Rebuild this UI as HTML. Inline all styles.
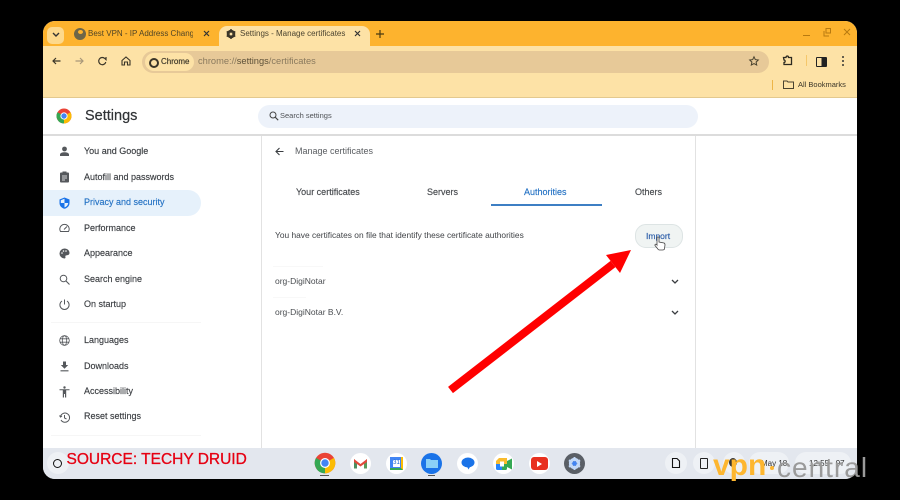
<!DOCTYPE html>
<html><head><meta charset="utf-8"><style>
html,body{margin:0;padding:0;width:900px;height:500px;background:#000;overflow:hidden}
body{font-family:"Liberation Sans",sans-serif;position:relative}
#w{position:absolute;left:43px;top:21px;width:814px;height:458px;border-radius:12px;overflow:hidden;background:#fff;filter:blur(.35px)}
.a{position:absolute}
.t{position:absolute;white-space:nowrap;line-height:12px;font-size:9px;color:#3c4043}
.n{font-size:9px;color:#3a3d41;-webkit-text-stroke:.15px #3a3d41}
svg{position:absolute;overflow:visible}
</style></head><body>
<div id="w">
<!-- tab strip -->
<div class="a" style="left:0;top:0;width:814px;height:26px;background:#FDB32E"></div>
<div class="a" style="left:0;top:25px;width:814px;height:52px;background:#FDE2A6"></div>
<div class="a" style="left:0;top:76px;width:814px;height:1px;background:#E3C98F"></div>
<div class="a" style="left:4px;top:6px;width:17px;height:17px;border-radius:5px;background:#FDD98C"></div>
<svg style="left:9px;top:11px" width="8" height="6"><path d="M1 1l3 3 3-3" fill="none" stroke="#333" stroke-width="1.4"/></svg>
<div class="a" style="left:31px;top:7px;width:12px;height:12px;border-radius:50%;background:#6d6648"></div>
<div class="a" style="left:35px;top:9px;width:5px;height:4px;border-radius:50%;background:#FDB32E"></div>
<div class="t" style="left:45px;top:7px;font-size:8px;color:#4f4426">Best VPN - IP Address Changer</div>
<div class="a" style="left:150px;top:2px;width:18px;height:22px;background:#FDB32E"></div>
<svg style="left:160px;top:9px" width="7" height="7"><path d="M1 1l5 5M6 1l-5 5" stroke="#333" stroke-width="1.2"/></svg>
<div class="a" style="left:176px;top:5px;width:151px;height:22px;border-radius:8px 8px 0 0;background:#FDE2A6"></div>
<svg style="left:183px;top:8px" width="10" height="10" viewBox="0 0 10 10"><circle cx="5" cy="5" r="3.2" fill="none" stroke="#3a3528" stroke-width="2.2"/><path d="M5 0v10M0.7 2.5l8.6 5M9.3 2.5l-8.6 5" stroke="#3a3528" stroke-width="1.5"/><circle cx="5" cy="5" r="1.3" fill="#FDE2A6"/></svg>
<div class="t" style="left:197px;top:7px;font-size:8px;color:#4a4330">Settings - Manage certificates</div>
<svg style="left:311px;top:9px" width="7" height="7"><path d="M1 1l5 5M6 1l-5 5" stroke="#333" stroke-width="1.2"/></svg>
<svg style="left:333px;top:9px" width="8" height="8"><path d="M4 0v8M0 4h8" stroke="#4a3a10" stroke-width="1.2"/></svg>
<!-- window controls -->
<div class="a" style="left:760px;top:14px;width:7px;height:1px;background:#b87a10"></div>
<svg style="left:780px;top:7px" width="8" height="9"><path d="M3 .5h4.500v4.500H3zM1 3v5h5" fill="none" stroke="#b87a10"/></svg>
<svg style="left:800px;top:7px" width="8" height="8"><path d="M1 1l6 6M7 1l-6 6" stroke="#b87a10" stroke-width="1"/></svg>
<!-- toolbar -->
<svg style="left:9px;top:36px" width="9" height="8" viewBox="0 0 9 8"><path d="M8.500 4H1M4 1L1 4l3 3" fill="none" stroke="#3a3528" stroke-width="1.200"/></svg>
<svg style="left:32px;top:36px" width="9" height="8" viewBox="0 0 9 8"><path d="M.5 4H8M5 1l3 3-3 3" fill="none" stroke="#a8977a" stroke-width="1.200"/></svg>
<svg style="left:55px;top:35px" width="9" height="10" viewBox="0 0 9 10"><path d="M7.800 6A3.600 3.600 0 1 1 6.800 2.500L8 3.600V1" fill="none" stroke="#3a3528" stroke-width="1.200"/></svg>
<svg style="left:78px;top:35px" width="10" height="10" viewBox="0 0 10 10"><path d="M1 4.500L5 1l4 3.500V9H6.500V6h-3v3H1z" fill="none" stroke="#3a3528" stroke-width="1.100"/></svg>
<div class="a" style="left:99px;top:30px;width:627px;height:22px;border-radius:11px;background:#E7C998"></div>
<div class="a" style="left:102px;top:32px;width:49px;height:18px;border-radius:9px;background:#FDE2A6"></div>
<div class="a" style="left:106px;top:37px;width:6px;height:6px;border-radius:50%;border:2px solid #3a3528"></div>
<div class="t" style="left:118px;top:35px;font-size:8px;color:#3a3528;-webkit-text-stroke:.15px #3a3528">Chrome</div>
<div class="t" style="left:155px;top:34px;font-size:9.300px;color:#8a7a5e">chrome://<span style="color:#5c5038">settings</span>/certificates</div>
<svg style="left:706px;top:35px" width="10" height="10" viewBox="0 0 10 10"><path d="M5 .8l1.300 2.800 3 .4-2.200 2.100.6 3L5 7.600 2.300 9.100l.6-3L.7 4l3-.4z" fill="none" stroke="#4a4330" stroke-width="1"/></svg>
<svg style="left:739px;top:34px" width="11" height="11" viewBox="0 0 11 11"><path d="M1.500 2.500h2.500c0-2 2.500-2 2.500 0h3v7h-7.500V7.500c1.500 0 1.500-2.500 0-2.500z" fill="none" stroke="#2d2a20" stroke-width="1.300"/></svg>
<div class="a" style="left:763px;top:34px;width:1px;height:11px;background:#F5C76A"></div>
<div class="a" style="left:773px;top:36px;width:9px;height:8px;border:1px solid #222;background:linear-gradient(90deg,#FDE2A6 50%,#222 50%);border-radius:1px"></div>
<div class="a" style="left:799px;top:35px;width:2px;height:2px;background:#333;box-shadow:0 4px #333,0 8px #333;border-radius:50%"></div>
<!-- bookmarks -->
<div class="a" style="left:729px;top:59px;width:1px;height:10px;background:#EDB548"></div>
<svg style="left:740px;top:59px" width="11" height="9"><path d="M.5 1h3.500l1 1h5.500v6.500H.5z" fill="none" stroke="#4a4330"/></svg>
<div class="t" style="left:755px;top:58px;font-size:7.500px;color:#3a3528">All Bookmarks</div>
<!-- header -->
<svg style="left:13px;top:87px" width="16" height="16" viewBox="0 0 16 16"><circle cx="8" cy="8" r="7.500" fill="#EA4335"/><path d="M8 8L1.500 11.700A7.500 7.500 0 0 0 8 15.500z" fill="#34A853"/><path d="M8 8L1.500 11.700A7.500 7.500 0 0 1 1.500 4.300z" fill="#34A853"/><path d="M8 8l6.500-3.700A7.500 7.500 0 0 1 8 15.500z" fill="#FBBC04"/><circle cx="8" cy="8" r="3.600" fill="#fff"/><circle cx="8" cy="8" r="2.700" fill="#4285F4"/></svg>
<div class="t" style="left:42px;top:86px;font-size:14.500px;line-height:18px;color:#303336;-webkit-text-stroke:.2px #303336">Settings</div>
<div class="a" style="left:215px;top:84px;width:440px;height:23px;border-radius:12px;background:#EDF2FA"></div>
<svg style="left:226px;top:90px" width="10" height="10" viewBox="0 0 10 10"><circle cx="4" cy="4" r="3" fill="none" stroke="#444" stroke-width="1"/><path d="M6.200 6.200l3 3" stroke="#444" stroke-width="1.100"/></svg>
<div class="t" style="left:237px;top:89px;font-size:7.500px;color:#505357">Search settings</div>
<div class="a" style="left:0;top:113px;width:814px;height:1.500px;background:#dcdcdc"></div>
<!-- sidebar -->
<div class="a" style="left:0;top:169px;width:158px;height:26px;border-radius:0 13px 13px 0;background:#E6F1FB"></div>
<svg style="left:16px;top:125px" width="11" height="11" viewBox="0 0 11 11"><circle cx="5.500" cy="3" r="2.400" fill="#55585c"/><path d="M1 10V8.500C1 7 3.500 6.300 5.500 6.300S10 7 10 8.500V10z" fill="#55585c"/></svg>
<div class="t n" style="left:41px;top:124px">You and Google</div>
<svg style="left:16px;top:150px" width="11" height="12" viewBox="0 0 11 12"><rect x="1" y="1.500" width="9" height="10" rx="1" fill="#55585c"/><rect x="3.500" y=".5" width="4" height="2" fill="#55585c"/><path d="M3 5h5M3 7h5M3 9h3" stroke="#fff" stroke-width=".7"/></svg>
<div class="t n" style="left:41px;top:150px">Autofill and passwords</div>
<svg style="left:16px;top:176px" width="11" height="12" viewBox="0 0 11 12"><path d="M5.500.5L10.500 2.500V6c0 3-2.200 5-5 5.800C2.700 11 .5 9 .5 6V2.500z" fill="#1A73E8"/><path d="M5.500 1.800L5.500 6H9.200C9 8 7.500 9.800 5.500 10.400V6H1.800V3.300z" fill="#E6F1FB"/></svg>
<div class="t n" style="left:41px;top:175px;color:#2472C4;-webkit-text-stroke:.15px #2472C4">Privacy and security</div>
<svg style="left:16px;top:202px" width="11" height="10" viewBox="0 0 11 10"><path d="M1.500 8.500A4.700 4.700 0 1 1 9.500 8.500z" fill="none" stroke="#55585c" stroke-width="1"/><path d="M5 6.500L8 3.500" stroke="#55585c" stroke-width="1"/></svg>
<div class="t n" style="left:41px;top:201px">Performance</div>
<svg style="left:16px;top:227px" width="11" height="11" viewBox="0 0 11 11"><path d="M5.500.5a5 5 0 0 0 0 10c1.300 0 1-1.300.8-2 0-1 .8-1.300 1.700-1.300 1.500 0 2.500-.8 2.500-2.200C10.500 2.300 8.300.5 5.500.5z" fill="#55585c"/><circle cx="3" cy="5" r=".8" fill="#fff"/><circle cx="4.500" cy="3" r=".8" fill="#fff"/><circle cx="7" cy="3" r=".8" fill="#fff"/></svg>
<div class="t n" style="left:41px;top:226px">Appearance</div>
<svg style="left:16px;top:253px" width="11" height="11" viewBox="0 0 11 11"><circle cx="4.500" cy="4.500" r="3.300" fill="none" stroke="#55585c" stroke-width="1"/><path d="M7 7l3.500 3.500" stroke="#55585c" stroke-width="1.100"/></svg>
<div class="t n" style="left:41px;top:252px">Search engine</div>
<svg style="left:16px;top:278px" width="11" height="11" viewBox="0 0 11 11"><path d="M3 2a4.600 4.600 0 1 0 5 0M5.500 .5v5" fill="none" stroke="#55585c" stroke-width="1"/></svg>
<div class="t n" style="left:41px;top:277px">On startup</div>
<div class="a" style="left:8px;top:301px;width:150px;height:1px;background:#f6f6f6"></div>
<svg style="left:16px;top:314px" width="11" height="11" viewBox="0 0 11 11"><g fill="none" stroke="#55585c" stroke-width=".8"><circle cx="5.500" cy="5.500" r="4.800"/><ellipse cx="5.500" cy="5.500" rx="2.200" ry="4.800"/><path d="M1 3.800h9M1 7.200h9"/></g></svg>
<div class="t n" style="left:41px;top:313px">Languages</div>
<svg style="left:16px;top:340px" width="11" height="11" viewBox="0 0 11 11"><path d="M4 .5h3v3.500h2.200L5.500 7.800 1.800 4H4z" fill="#55585c"/><path d="M1.500 9.800h8" stroke="#55585c" stroke-width="1.100"/></svg>
<div class="t n" style="left:41px;top:339px">Downloads</div>
<svg style="left:16px;top:365px" width="11" height="12" viewBox="0 0 11 12"><circle cx="5.500" cy="1.500" r="1.200" fill="#55585c"/><path d="M.5 3.300h10v1H7.200V11.500H6V8H5v3.500H3.800V4.300H.5z" fill="#55585c"/></svg>
<div class="t n" style="left:41px;top:364px">Accessibility</div>
<svg style="left:16px;top:391px" width="11" height="11" viewBox="0 0 11 11"><path d="M1.500 4.500A4.600 4.600 0 1 1 2 8M.5 3.500l1 1.500 1.500-1M5.500 3v3l2 1" fill="none" stroke="#55585c" stroke-width="1"/></svg>
<div class="t n" style="left:41px;top:389px">Reset settings</div>
<div class="a" style="left:8px;top:414px;width:150px;height:1px;background:#f6f6f6"></div>
<!-- card -->
<div class="a" style="left:218px;top:115px;width:1px;height:312px;background:#e2e2e2"></div>
<div class="a" style="left:652px;top:115px;width:1px;height:312px;background:#e2e2e2"></div>
<svg style="left:232px;top:126px" width="9" height="9" viewBox="0 0 9 9"><path d="M8.500 4.500H1M4.500 1L1 4.500 4.500 8" fill="none" stroke="#3a3d41" stroke-width="1.100"/></svg>
<div class="t" style="left:252px;top:124px;color:#5a5d61">Manage certificates</div>
<div class="t n" style="left:253px;top:165px;color:#4a4d51">Your certificates</div>
<div class="t n" style="left:384px;top:165px;color:#4a4d51">Servers</div>
<div class="t n" style="left:481px;top:165px;color:#2472C4;-webkit-text-stroke:.15px #2472C4">Authorities</div>
<div class="a" style="left:448px;top:183px;width:111px;height:1.500px;background:#3D7FC4"></div>
<div class="t n" style="left:592px;top:165px;color:#4a4d51">Others</div>
<div class="t" style="left:232px;top:208px;font-size:8.400px;color:#404347">You have certificates on file that identify these certificate authorities</div>
<div class="a" style="left:592px;top:203px;width:46px;height:22px;border-radius:11px;background:#F0F4F3;border:1px solid #DDE4E4"></div>
<div class="t" style="left:603px;top:209px;font-size:8.500px;color:#2A5CA8;-webkit-text-stroke:.15px #2A5CA8">Import</div>
<svg style="left:611px;top:215px" width="12" height="15" viewBox="0 0 12 15"><path d="M3 8V2c0-1.500 2-1.500 2 0v4l5 1c1 .3 1 1 1 2l-.5 3.500c0 1-1 1.500-2 1.500H5.500c-1 0-1.500-.5-2-1.500L1 9.500C.5 8.500 2 7.500 3 9z" fill="#fff" stroke="#444" stroke-width=".8"/></svg>
<div class="a" style="left:230px;top:245px;width:50px;height:1px;background:#f8f8f8"></div>
<div class="t" style="left:232px;top:254px;font-size:8.500px;color:#4a4d51">org-DigiNotar</div>
<svg style="left:628px;top:258px" width="8" height="6"><path d="M1 1l3 3 3-3" fill="none" stroke="#3a3d41" stroke-width="1.300"/></svg>
<div class="a" style="left:230px;top:276px;width:33px;height:1px;background:#f8f8f8"></div>
<div class="t" style="left:232px;top:285px;font-size:8.500px;color:#4a4d51">org-DigiNotar B.V.</div>
<svg style="left:628px;top:289px" width="8" height="6"><path d="M1 1l3 3 3-3" fill="none" stroke="#3a3d41" stroke-width="1.300"/></svg>
<!-- shelf -->
<div class="a" style="left:0;top:427px;width:814px;height:31px;background:#E3E7EE"></div>
<div class="a" style="left:4px;top:431px;width:22px;height:22px;border-radius:50%;background:#EEF1F5"></div>
<div class="a" style="left:10px;top:438px;width:7px;height:7px;border-radius:50%;border:1.300px solid #111"></div>
<div class="t" style="left:23.500px;top:430.500px;font-size:15.500px;line-height:16px;color:#E60012;-webkit-text-stroke:.3px #E60012">SOURCE: TECHY DRUID</div>
<svg style="left:271px;top:431px" width="22" height="22" viewBox="0 0 16 16"><circle cx="8" cy="8" r="7.500" fill="#EA4335"/><path d="M8 8L1.500 11.700A7.500 7.500 0 0 0 8 15.500z" fill="#34A853"/><path d="M8 8L1.500 11.700A7.500 7.500 0 0 1 1.500 4.300z" fill="#34A853"/><path d="M8 8l6.500-3.700A7.500 7.500 0 0 1 8 15.500z" fill="#FBBC04"/><circle cx="8" cy="8" r="3.600" fill="#fff"/><circle cx="8" cy="8" r="2.700" fill="#4285F4"/></svg>
<div class="a" style="left:277px;top:454px;width:9px;height:1px;background:#555"></div>
<div class="a" style="left:307px;top:432px;width:21px;height:21px;border-radius:50%;background:#fff"></div>
<svg style="left:311px;top:437px" width="13" height="11" viewBox="0 0 13 11"><path d="M0 1v9.500h3V4z" fill="#4d8f5f"/><path d="M13 1v9.500h-3V4z" fill="#5a9a5a"/><path d="M0 1l6.500 5L13 1v3L6.500 8.500 0 4z" fill="#E24A3B"/></svg>
<div class="a" style="left:343px;top:432px;width:21px;height:21px;border-radius:50%;background:#fff"></div>
<div class="a" style="left:347px;top:436px;width:13px;height:13px;background:#4285F4;border-right:2px solid #FBBC04;border-bottom:2px solid #34A853;box-sizing:border-box"></div>
<div class="a" style="left:350px;top:439px;width:7px;height:7px;background:#fff;font-size:6px;line-height:7px;color:#1967d2;text-align:center">31</div>
<div class="a" style="left:378px;top:432px;width:21px;height:21px;border-radius:50%;background:#1A73E8"></div>
<svg style="left:383px;top:437px" width="12" height="10"><path d="M0 1h4l1 1h7v8H0z" fill="#8AD0F7"/></svg>
<div class="a" style="left:385px;top:454px;width:7px;height:1px;background:#555"></div>
<div class="a" style="left:414px;top:432px;width:21px;height:21px;border-radius:50%;background:#fff"></div>
<svg style="left:418px;top:436px" width="14" height="13" viewBox="0 0 14 13"><ellipse cx="7" cy="5.500" rx="6.500" ry="5" fill="#1A73E8"/><path d="M6 9.500l1.500 3 2-3.500z" fill="#1A73E8"/></svg>
<div class="a" style="left:450px;top:432px;width:21px;height:21px;border-radius:50%;background:#fff"></div>
<svg style="left:453px;top:437px" width="16" height="12" viewBox="0 0 16 12"><path d="M3 0h8v6H0V3z" fill="#F9BB2D"/><path d="M0 6h6v6H1.500C.500 12 0 11.500 0 10.500z" fill="#2684FC"/><path d="M6 6h5v4.500c0 1-.5 1.500-1.500 1.500H6z" fill="#34A853"/><path d="M11 3l5-2.500v11L11 9z" fill="#34A853"/><rect x="4" y="3.500" width="4" height="5" fill="#fff"/></svg>
<div class="a" style="left:486px;top:432px;width:21px;height:21px;border-radius:50%;background:#fff"></div>
<div class="a" style="left:488px;top:436px;width:17px;height:13px;border-radius:3px;background:#E8301F"></div>
<svg style="left:494px;top:440px" width="5" height="6"><path d="M0 0l5 3-5 3z" fill="#fff"/></svg>
<div class="a" style="left:521px;top:432px;width:21px;height:21px;border-radius:50%;background:#5A5F66"></div>
<svg style="left:525px;top:436px" width="13" height="13" viewBox="0 0 10 10"><circle cx="5" cy="5" r="3.200" fill="none" stroke="#C4DAF8" stroke-width="2.200"/><path d="M5 0v10M0.700 2.500l8.600 5M9.300 2.500l-8.600 5" stroke="#C4DAF8" stroke-width="1.500"/><circle cx="5" cy="5" r="1.800" fill="#4285F4"/></svg>
<!-- tray -->
<div class="a" style="left:622px;top:431px;width:22px;height:22px;border-radius:50%;background:#EEF1F5"></div>
<svg style="left:629px;top:437px" width="8" height="10"><path d="M.5.5h4.500l2.500 2.500v6.500h-7z" fill="none" stroke="#111" stroke-width="1.100"/></svg>
<div class="a" style="left:650px;top:431px;width:22px;height:22px;border-radius:50%;background:#EEF1F5"></div>
<div class="a" style="left:657px;top:437px;width:6px;height:9px;border:1.200px solid #222;border-radius:1px"></div>
<div class="a" style="left:680px;top:431px;width:22px;height:22px;border-radius:50%;background:#EEF1F5"></div>
<div class="a" style="left:686px;top:437px;width:8px;height:9px;border-radius:50%;background:#333"></div>
<div class="a" style="left:706px;top:431px;width:40px;height:22px;border-radius:11px;background:#EEF1F5"></div>
<div class="t" style="left:718px;top:437px;font-size:8px;color:#333">May 18</div>
<div class="a" style="left:752px;top:431px;width:56px;height:22px;border-radius:11px;background:#EEF1F5"></div>
<div class="t" style="left:766px;top:437px;font-size:8px;color:#333">12:55 &nbsp;&nbsp;97</div>
</div>
<!-- arrow -->
<svg style="left:0;top:0" width="900" height="500"><path d="M450.500 390L613 264" stroke="#FF0000" stroke-width="8" fill="none"/><path d="M631 250L606 255 620 273z" fill="#FF0000"/></svg>
<!-- watermark -->
<div class="t" style="left:713px;top:448px;font-size:30px;line-height:36px;font-weight:bold;color:#FDB62F">vpn</div>
<div class="a" style="left:770px;top:466px;width:4px;height:4px;border-radius:50%;background:#FDB62F"></div>
<div class="t" style="left:777px;top:450px;font-size:28px;line-height:36px;color:#9a9a9a;letter-spacing:1px">central</div>
</body></html>
